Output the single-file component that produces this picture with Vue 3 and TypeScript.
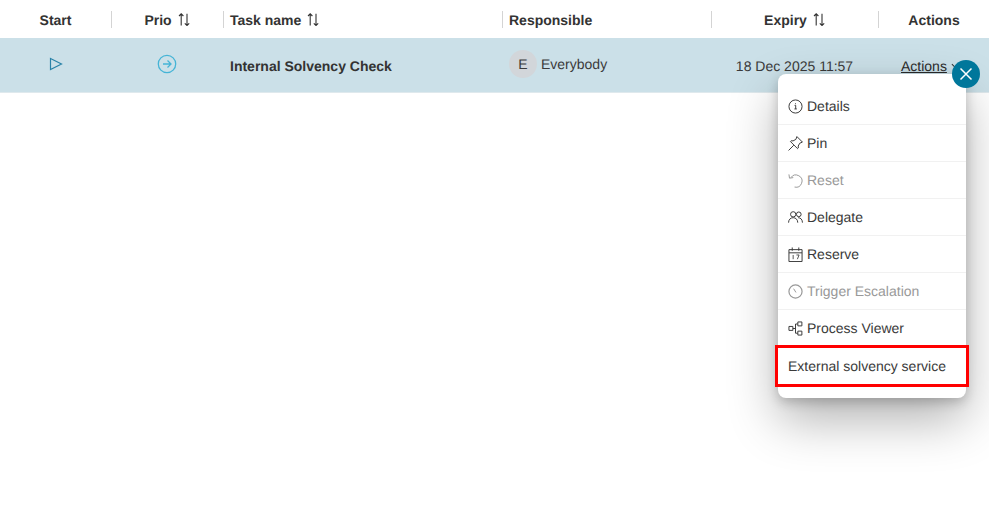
<script setup lang="ts">
const sortPath = 'M3.200 12.500V.8M1 3 3.200.8 5.400 3M9 .8V12.500M6.800 10.300 9 12.500l2.200-2.200'
interface Item { label: string; icon?: string; disabled?: boolean }
const items: Item[] = [
  { label: 'Details', icon: 'info' },
  { label: 'Pin', icon: 'pin' },
  { label: 'Reset', icon: 'reset', disabled: true },
  { label: 'Delegate', icon: 'people' },
  { label: 'Reserve', icon: 'calendar' },
  { label: 'Trigger Escalation', icon: 'clock', disabled: true },
  { label: 'Process Viewer', icon: 'flow' },
]
</script>

<template>
  <div class="page">
    <div class="grid header">
      <div class="hcell center">Start</div>
      <div class="hcell center sep">Prio
        <svg class="sort" viewBox="0 0 13 13"><path :d="sortPath" /></svg>
      </div>
      <div class="hcell sep">Task name
        <svg class="sort" viewBox="0 0 13 13"><path :d="sortPath" /></svg>
      </div>
      <div class="hcell sep">Responsible</div>
      <div class="hcell center sep">Expiry
        <svg class="sort" viewBox="0 0 13 13"><path :d="sortPath" /></svg>
      </div>
      <div class="hcell center sep">Actions</div>
    </div>
    <div class="grid row">
      <div class="cell center">
        <svg class="play" viewBox="0 0 14 14"><path d="M1.500 1.500 12.500 7 1.500 12.500Z" /></svg>
      </div>
      <div class="cell center">
        <svg class="prio" viewBox="0 0 20 20">
          <circle cx="10" cy="10" r="8.700" />
          <path d="M6 10h8M10.500 6.500 14 10l-3.500 3.500" />
        </svg>
      </div>
      <div class="cell task">Internal Solvency Check</div>
      <div class="cell resp">
        <span class="avatar">E</span>
        <span>Everybody</span>
      </div>
      <div class="cell center date">18 Dec 2025 11:57</div>
      <div class="cell actions">
        <span class="link">Actions</span>
        <svg class="chev" viewBox="0 0 10 6"><path d="M1 1 5 5l4-4" /></svg>
      </div>
    </div>

    <div class="menu">
      <button class="close" type="button" aria-label="Close">
        <svg viewBox="0 0 14 14"><path d="M1.500 1.500l11 11M12.500 1.500l-11 11" /></svg>
      </button>
      <div v-for="item in items" :key="item.label" class="item" :class="{ disabled: item.disabled }">
        <svg class="ico" viewBox="0 0 16 16">
          <template v-if="item.icon === 'info'">
            <circle cx="8" cy="8" r="7" />
            <path d="M7 6.800h1.200v3.800M6.800 10.600h2.600M8 4.600v.9" />
          </template>
          <template v-else-if="item.icon === 'pin'">
            <path d="M.6 15.400 6.200 9.800M9.500.6l5.900 5.900-2.900 1.200-1.600 3 .1 2.100-.8.7-7.600-7.600.7-.8 2.100.1 3-1.600Z" />
          </template>
          <template v-else-if="item.icon === 'reset'">
            <path d="M3.200 4.800A6.500 6.500 0 1 1 7 15M1 1.500l.6 4 4-.6" />
          </template>
          <template v-else-if="item.icon === 'people'">
            <circle cx="5.500" cy="4.600" r="2.800" />
            <circle cx="11.500" cy="4.600" r="2.500" />
            <path d="M.6 13.500c0-3.200 2-5.300 4.900-5.300s4.900 2.100 4.900 5.300M10.800 8.200c2.800 0 4.600 2.100 4.600 5.300" />
          </template>
          <template v-else-if="item.icon === 'calendar'">
            <path d="M1 2.800h14v12.700H1ZM1 6.200h14M4.500.5v3.500M11.500.5v3.500" />
            <path class="thin" d="M5.500 8.500v4.500M9 8.500h2.800L10 13" />
          </template>
          <template v-else-if="item.icon === 'clock'">
            <circle class="heavy" cx="8" cy="8" r="7" />
            <path d="M6 5 8.500 9" />
          </template>
          <template v-else>
            <path d="M1 5.800h4.200V10H1ZM10.500 1h4.300v4.200h-4.300ZM10.500 10.800h4.300V15h-4.300ZM5.200 8H8M10.500 3.200H8v9.800h2.500" />
          </template>
        </svg>
        <span>{{ item.label }}</span>
      </div>
      <div class="item external">External solvency service</div>
    </div>
  </div>
</template>

<style scoped>
.page {
  position: relative;
  width: 989px;
  height: 519px;
  overflow: hidden;
  background: #fff;
  color: #3a3a3a;
  font-family: "Liberation Sans", Arial, sans-serif;
  font-size: 14px;
  text-rendering: geometricPrecision;
}
.grid {
  display: grid;
  grid-template-columns: 111px 112px 279px 209px 167px 111px;
}
.header {
  height: 38px;
  box-sizing: border-box;
  padding-top: 11px;
  align-items: start;
  font-weight: 700;
  color: #333;
}
.hcell {
  display: flex;
  align-items: center;
  height: 17px;
  box-sizing: border-box;
  padding-top: 1px;
  padding-left: 6px;
  gap: 6px;
  white-space: nowrap;
}
.hcell.sep {
  border-left: 1px solid #d4d4d4;
}
.hcell.center {
  justify-content: center;
  padding-left: 0;
}
.sort {
  width: 13px;
  height: 13px;
  fill: none;
  stroke: #333;
  stroke-width: 1.100;
  margin-top: -2px;
}
.row {
  height: 55px;
  box-sizing: border-box;
  background: #cbe0e8;
  border-bottom: 1px solid #dfe9ed;
  align-items: center;
}
.cell {
  display: flex;
  align-items: center;
  white-space: nowrap;
}
.cell.center {
  justify-content: center;
}
.play {
  width: 14px;
  height: 14px;
  fill: none;
  stroke: #2a83a8;
  stroke-width: 1.200;
  margin-top: -2px;
}
.prio {
  width: 20px;
  height: 20px;
  fill: none;
  stroke: #45b4d6;
  stroke-width: 1.300;
  margin-top: -2px;
}
.task {
  padding-left: 7px;
  padding-top: 2px;
  font-weight: 700;
  color: #333;
}
.resp {
  padding-left: 7px;
  gap: 4px;
  margin-top: -2px;
}
.avatar {
  width: 28px;
  height: 28px;
  border-radius: 50%;
  background: #d2d6da;
  display: flex;
  align-items: center;
  justify-content: center;
}
.date {
  padding-top: 2px;
}
.actions {
  padding-left: 23px;
  padding-top: 2px;
  gap: 4px;
  color: #2b2b2b;
}
.link {
  text-decoration: underline;
}
.chev {
  width: 9px;
  height: 6px;
  fill: none;
  stroke: #333;
  stroke-width: 1.200;
}
.menu {
  position: absolute;
  left: 778px;
  top: 74px;
  width: 188px;
  height: 324px;
  box-sizing: border-box;
  padding-top: 14px;
  background: #fff;
  border-radius: 8px;
  box-shadow: 0 22px 50px rgba(0, 0, 0, 0.3), 0 4px 12px rgba(0, 0, 0, 0.2);
}
.close {
  position: absolute;
  right: -14px;
  top: -14px;
  width: 28px;
  height: 28px;
  padding: 0;
  border: 0;
  border-radius: 50%;
  background: #00779b;
  display: flex;
  align-items: center;
  justify-content: center;
}
.close svg {
  width: 14px;
  height: 14px;
  fill: none;
  stroke: #fff;
  stroke-width: 1.500;
}
.item {
  display: flex;
  align-items: center;
  gap: 4px;
  height: 37px;
  box-sizing: border-box;
  padding-left: 10px;
  border-bottom: 1px solid #f1f1f1;
  white-space: nowrap;
}
.item.disabled {
  color: #999;
}
.ico {
  width: 15px;
  height: 15px;
  flex: none;
  fill: none;
  stroke: currentColor;
  stroke-width: 1.050;
}
.thin {
  stroke-width: 0.900;
}
.heavy {
  stroke-width: 1.300;
}
.external {
  position: relative;
  height: 36px;
  border-bottom: 0;
  margin-top: 1px;
}
.external::after {
  content: "";
  position: absolute;
  left: -3px;
  right: -3px;
  top: -3px;
  bottom: -3px;
  border: 3px solid #ff0000;
  pointer-events: none;
}
</style>
